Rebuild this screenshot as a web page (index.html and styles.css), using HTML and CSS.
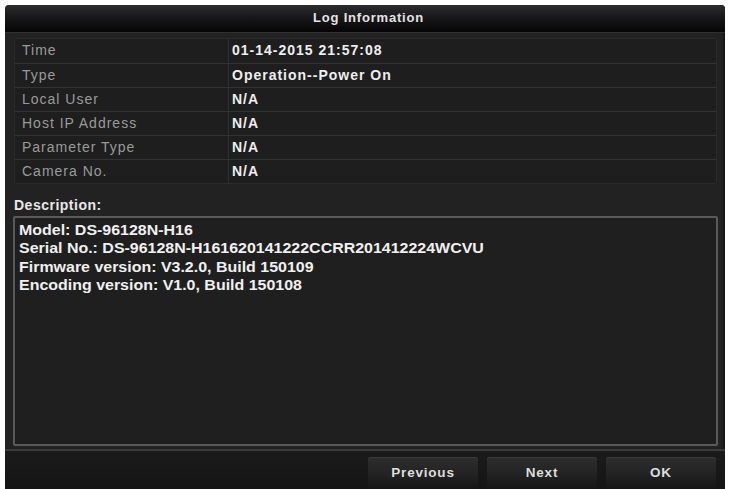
FILE: index.html
```html
<!DOCTYPE html>
<html>
<head>
<meta charset="utf-8">
<link rel="stylesheet" href="styles.css">
</head>
<body>
<div class="panel">
  <div class="titlebar">Log Information</div>
  <div class="content">
    <div class="table">
      <div class="row"><div class="label">Time</div><div class="value">01-14-2015 21:57:08</div></div>
      <div class="row"><div class="label">Type</div><div class="value">Operation--Power On</div></div>
      <div class="row"><div class="label">Local User</div><div class="value">N/A</div></div>
      <div class="row"><div class="label">Host IP Address</div><div class="value">N/A</div></div>
      <div class="row"><div class="label">Parameter Type</div><div class="value">N/A</div></div>
      <div class="row"><div class="label">Camera No.</div><div class="value">N/A</div></div>
    </div>
    <div class="desc-label">Description:</div>
    <div class="desc-box">
      <div class="desc-text">
        <div>Model: DS-96128N-H16</div>
        <div>Serial No.: DS-96128N-H161620141222CCRR201412224WCVU</div>
        <div>Firmware version: V3.2.0, Build 150109</div>
        <div>Encoding version: V1.0, Build 150108</div>
      </div>
    </div>
  </div>
  <div class="footer">
    <button class="btn">Previous</button>
    <button class="btn">Next</button>
    <button class="btn">OK</button>
  </div>
</div>
</body>
</html>
```

FILE: styles.css
```css
html, body {
  margin: 0;
  padding: 0;
  background: #ffffff;
  height: 489px;
  overflow: hidden;
}
body {
  font-family: "Liberation Sans", Arial, sans-serif;
  padding: 5px 0 0 5px;
  box-sizing: border-box;
}
.panel {
  width: 720px;
  height: 484px;
  overflow: hidden;
  background: #222222;
  border-radius: 4px 4px 0 0;
  display: flex;
  flex-direction: column;
  box-shadow: inset -2px 0 0 #161616;
}
.titlebar {
  flex-shrink: 0;
  height: 27px;
  line-height: 25px;
  text-align: center;
  padding-left: 7px;
  color: #e4e4e4;
  font-size: 13px;
  font-weight: bold;
  letter-spacing: 0.8px;
  background: linear-gradient(#2c2c2e 0%, #18181a 45%, #050505 100%);
  border-radius: 4px 4px 0 0;
  border-bottom: 1px solid #303030;
}
.content {
  flex-shrink: 0;
  padding: 5px 8px 0 9px;
}
.table {
  display: flex;
  flex-direction: column;
  background: #1e1e1e;
  border: 1px solid #2b2b2b;
  border-radius: 2px;
}
.row {
  display: flex;
  height: 24px;
  border-top: 1px solid #333333;
  box-sizing: border-box;
}
.row:first-child {
  border-top: none;
}
.label {
  width: 214px;
  padding-left: 7px;
  color: #9a9a9a;
  font-size: 14px;
  letter-spacing: 1px;
  line-height: 23px;
  border-right: 1px solid #303030;
  box-sizing: border-box;
}
.value {
  flex: 1;
  padding-left: 3px;
  color: #eeeeee;
  font-size: 14px;
  font-weight: bold;
  letter-spacing: 1px;
  line-height: 23px;
}
.desc-label {
  color: #e8e8e8;
  font-size: 14px;
  font-weight: bold;
  letter-spacing: 0.5px;
  margin: 12px 0 0 0;
  height: 20px;
  line-height: 18px;
  padding-left: 0;
}
.desc-box {
  margin-left: -1px;
  margin-right: -1px;
  height: 230px;
  background: #1f1f1f;
  border: 2px solid #5a5a5a;
  border-radius: 2px;
  box-sizing: border-box;
  padding: 3px 0 0 4px;
  color: #f0f0f0;
  font-size: 14px;
  font-weight: bold;
  line-height: 18.3px;
  overflow: hidden;
}
.desc-text {
  width: 560px;
  transform: scaleX(1.14);
  transform-origin: left top;
}
.footer {
  flex: 1 0 auto;
  margin-top: 3px;
  border-top: 2px solid #3a3a3a;
  background: linear-gradient(#1b1b1b, #141414);
  display: flex;
  justify-content: flex-end;
  align-items: flex-start;
  gap: 9px;
  padding: 6px 9px 0 0;
}
.btn {
  flex-shrink: 0;
  width: 110px;
  height: 36px;
  border: none;
  border-radius: 3px 3px 0 0;
  background: linear-gradient(#2e2e2e 0%, #222222 50%, #121212 100%);
  box-shadow: inset 0 1px 0 #3a3a3a;
  color: #dddddd;
  font-family: "Liberation Sans", Arial, sans-serif;
  font-size: 13.5px;
  font-weight: bold;
  letter-spacing: 0.8px;
  padding: 0 0 6px 0;
}
```
